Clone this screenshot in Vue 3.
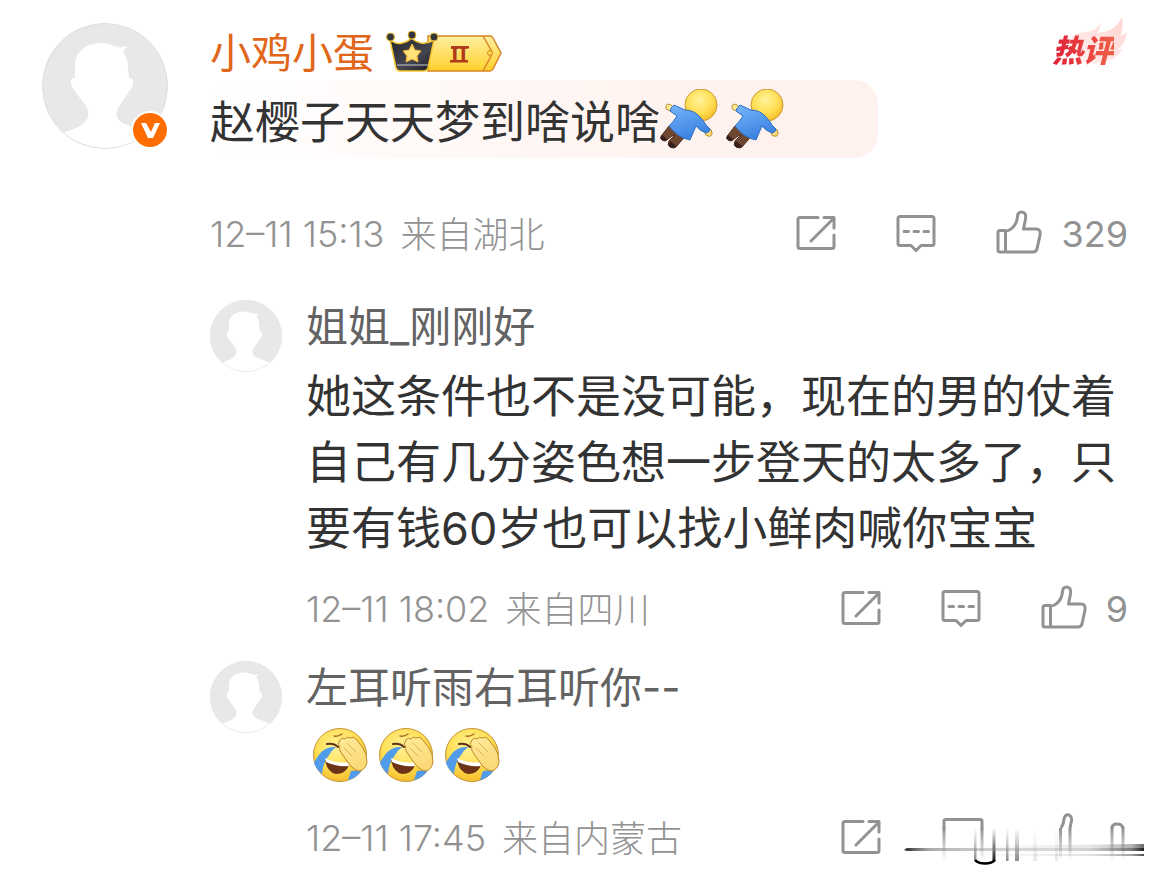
<template>
  <svg class="defs" width="0" height="0" aria-hidden="true">
    <defs>
      <linearGradient id="gold" x1="0" y1="0" x2="0" y2="1">
        <stop offset="0" stop-color="#fff0a0" />
        <stop offset="1" stop-color="#ffd02c" />
      </linearGradient>
      <linearGradient id="crown" x1="0" y1="0" x2="1" y2="1">
        <stop offset="0" stop-color="#25252d" />
        <stop offset="0.6" stop-color="#454550" />
        <stop offset="1" stop-color="#18181e" />
      </linearGradient>
      <radialGradient id="face" cx="0.45" cy="0.35" r="0.65">
        <stop offset="0" stop-color="#fff29a" />
        <stop offset="0.6" stop-color="#ffdf55" />
        <stop offset="1" stop-color="#f5bd2c" />
      </radialGradient>
      <linearGradient id="shirt" x1="0" y1="0" x2="0.4" y2="1">
        <stop offset="0" stop-color="#76b6fb" />
        <stop offset="1" stop-color="#3b82e2" />
      </linearGradient>
      <linearGradient id="hand" x1="0" y1="0" x2="0.4" y2="1">
        <stop offset="0" stop-color="#ffeb9a" />
        <stop offset="1" stop-color="#fbd977" />
      </linearGradient>
      <linearGradient id="flame" x1="0" y1="1" x2="1" y2="0">
        <stop offset="0" stop-color="#fff3f1" />
        <stop offset="1" stop-color="#ffd3d0" />
      </linearGradient>
      <linearGradient id="fade-down" x1="0" y1="0" x2="0" y2="1">
        <stop offset="0" stop-color="#8c8c8c" />
        <stop offset="1" stop-color="#8c8c8c" stop-opacity="0" />
      </linearGradient>
      <linearGradient id="fade-up" x1="0" y1="0" x2="0" y2="1">
        <stop offset="0" stop-color="#000" stop-opacity="0" />
        <stop offset="1" stop-color="#000" stop-opacity="0.9" />
      </linearGradient>
      <linearGradient id="fade-mid" x1="0" y1="0" x2="0" y2="1">
        <stop offset="0" stop-color="#000" stop-opacity="0" />
        <stop offset="1" stop-color="#000" stop-opacity="0.45" />
      </linearGradient>
      <linearGradient id="streak-left" x1="0" y1="0" x2="1" y2="0">
        <stop offset="0" stop-color="#222" />
        <stop offset="0.15" stop-color="#777" stop-opacity="0.6" />
        <stop offset="1" stop-color="#999" stop-opacity="0" />
      </linearGradient>
      <linearGradient id="streak-right" x1="0" y1="0" x2="1" y2="0">
        <stop offset="0" stop-color="#999" stop-opacity="0" />
        <stop offset="0.7" stop-color="#777" stop-opacity="0.3" />
        <stop offset="0.93" stop-color="#444" stop-opacity="0.7" />
        <stop offset="1" stop-color="#000" />
      </linearGradient>
      <symbol id="i-avatar" viewBox="0 0 126 126">
        <circle cx="63" cy="63" r="62.500" fill="#e8e8e8" />
        <path fill="#fff" d="M33 55V42C33 29 44 20 59 20c8 0 11 3 17 4 3 .500 6 0 9-1-1 3-3 4-4 6 3 5 5 9 5 15l1 11c3 0 4 1 4 4 0 4-1 6-3 8L76 85c-2 4-2 8 0 11 4 6 17 8 29 14a62 62 0 0 1-84 0c9-4 20-6 24-14 2-4 2-9-1-13L32 67c-2-3-3-5-3-8 0-3 1-4 4-4z" />
        <circle cx="63" cy="63" r="62.500" fill="none" stroke="#dfdfdf" />
      </symbol>
      <symbol id="i-share" viewBox="0 0 42 42">
        <path d="M23 4.500H5q-2 0-2 2v27q0 2 2 2h32q2 0 2-2V22M29 4.500h10V15M16 28L38 6" />
      </symbol>
      <symbol id="i-comment" viewBox="0 0 42 42">
        <path d="M5 3.500h32q2 0 2 2v25q0 2-2 2H26l-5 5-5-5H5q-2 0-2-2v-25q0-2 2-2zM9 18.500h4.500M19 18.500h4.500M29 18.500h4.500" />
      </symbol>
      <symbol id="i-like" viewBox="0 0 48 48">
        <path d="M10.500 20.500H5q-2 0-2 2V40q0 2 2 2h33q3 0 4-3l3-14q1-6-4-6H28.500l2-10q1-7-4-7-4 0-4 5-1 9-8 13-2 1-4 1V42" />
      </symbol>
      <symbol id="i-dive" viewBox="0 0 60 60">
        <path fill="#6f4630" stroke="#4f2e1f" d="M9 37L2 46q-3 3 0 5 3 2 5 0l5-4 3-1-6 6q-2 4 1 6 4 2 6 0l12-14z" />
        <path fill="#35211a" d="M2 46q-3 3 0 5 3 2 5-1zM10 52q-3 4 0 6 4 2 6-1z" />
        <circle cx="41" cy="16" r="16" fill="url(#face)" stroke="#c99a32" />
        <path fill="url(#hand)" stroke="#b58c28" d="M14 19l-3-3q-4-2-5 1-1 3 2 4l5 2zM45 43q0 4 3 4 4 1 4-3 0-4-3-4z" />
        <path fill="url(#shirt)" stroke="#316fc0" d="M14 16l11 5q9 0 15 7 4 4 6 8l4 4q0 3-4 4-6-2-10-7l-6 14q-12-2-21-14 5-5 8-10l-7-5q1-4 4-6z" />
      </symbol>
      <symbol id="i-facepalm" viewBox="0 0 56 56">
        <circle cx="28" cy="28" r="26.500" fill="url(#face)" stroke="#c49535" />
        <path fill="#509bea" d="M24 20q-11-1-17 8-4 5-5 8 2 6 8 11 1-12 7-19 3-5 7-8zM36 53l3-9 11-1q-5 8-14 10z" />
        <path fill="#6d3317" d="M13 33q9 5 24 5-3 9-13 9-9-2-11-14z" />
        <path fill="#fff" d="M13 31q12 6 23 4l1 4q-13 1-23-4z" />
        <path fill="none" stroke="#5d3415" stroke-width="2" stroke-linecap="round" d="M15 17q7-1 11 3" />
        <path fill="none" stroke="#a97524" stroke-width="1.500" stroke-linecap="round" d="M22 9q4 1 8-2" />
        <path fill="url(#hand)" stroke="#bd8828" d="M28 13q2-3 5-1 2-3 5-1 4-2 6 1l7 9q4 6 4 14-1 7-7 9-5 0-11-7l-9-13q-1-3 0-4-3-3-1-5z" />
        <path fill="none" stroke="#dfb053" stroke-linecap="round" d="M32 21l8 8M35 16l9 9" />
      </symbol>
    </defs>
  </svg>

  <main class="thread">
    <article class="comment">
      <div class="avatar-wrap">
        <svg class="avatar"><use href="#i-avatar" /></svg>
        <svg class="verified" viewBox="0 0 38 38">
          <circle cx="19" cy="19" r="19" fill="#fff" />
          <circle cx="19" cy="19" r="17" fill="#ff6d00" />
          <path fill="#fff" d="M10 12h5l5 9 4-9h5l-7 15h-5z" />
        </svg>
      </div>

      <div class="content">
        <header class="name-row">
          <a class="name main-name" href="#">小鸡小蛋</a>
          <svg class="level" viewBox="0 0 116 44">
            <path fill="url(#gold)" stroke="#d98426" stroke-width="1.500" d="M42 6h62q2 0 3 2l8 15-8 16q-1 2-3 2H42z" />
            <path fill="none" stroke="#d98426" stroke-width="1.500" d="M97 6l8 14q1 3 0 6l-8 15" />
            <circle cx="104" cy="23" r="2.500" fill="#ffd64a" stroke="#d98426" />
            <path fill="url(#crown)" stroke="#f7c72f" stroke-width="1.500" d="M4 10q7 5 12 3 6-1 9-5 5 4 10 5 6 1 13-3l-6 28q-1 3-4 3H14q-3 0-4-3z" />
            <path fill="none" stroke="#c9c9d2" d="M11 35h31" />
            <g fill="#34343c" stroke="#eabb2f">
              <circle cx="4.500" cy="7" r="4" />
              <circle cx="26" cy="5" r="4" />
              <circle cx="48" cy="7" r="4" />
            </g>
            <path fill="#ffe27a" stroke="#f2b62c" stroke-linejoin="round" d="M26 14l3 6 6 1-4 5 1 6-6-3-6 3 1-6-4-5 6-1z" />
            <text class="level-text" x="73" y="32" text-anchor="middle">II</text>
            <path fill="#b03a1c" d="M65 16h18v2.500H65zM64 30h18v2.500H64z" />
          </svg>
          <span class="hot">
            <svg class="flame" viewBox="0 0 66 54">
              <path fill="url(#flame)" d="M8 26Q11 14 25 15q9-1 14-9-1 6-4 10Q53 15 60 0q2 12-2 19 4-1 7-4-2 13-10 18l6-1q-8 12-24 14Q14 50 8 26z" />
            </svg>
            <b class="hot-text">热评</b>
          </span>
        </header>

        <p class="bubble">赵樱子天天梦到啥说啥<span class="emojis dives"><svg v-for="n in 2" :key="n" class="dive"><use href="#i-dive" /></svg></span></p>

        <footer class="meta">
          <span class="time">12–11 15:13</span>
          <span class="place">来自湖北</span>
          <div class="actions">
            <button type="button" aria-label="转发"><svg class="icon"><use href="#i-share" /></svg></button>
            <button type="button" aria-label="评论"><svg class="icon"><use href="#i-comment" /></svg></button>
            <button type="button" class="like"><svg class="icon icon-like"><use href="#i-like" /></svg>329</button>
          </div>
        </footer>

        <section class="replies">
          <article v-for="reply in replies" :key="reply.name" class="reply">
            <svg class="avatar avatar-small"><use href="#i-avatar" /></svg>
            <div class="content">
              <a class="name reply-name" href="#">{{ reply.name }}</a>
              <p v-if="reply.text" class="text">{{ reply.text }}</p>
              <p v-else class="text emojis">
                <svg v-for="n in reply.faces" :key="n" class="face"><use href="#i-facepalm" /></svg>
              </p>
              <footer class="meta">
                <span class="time">{{ reply.time }}</span>
                <span class="place">{{ reply.place }}</span>
                <div class="actions" :class="{ smudged: !reply.likes }">
                  <button type="button" aria-label="转发"><svg class="icon"><use href="#i-share" /></svg></button>
                  <template v-if="reply.likes">
                    <button type="button" aria-label="评论"><svg class="icon"><use href="#i-comment" /></svg></button>
                    <button type="button" class="like"><svg class="icon icon-like"><use href="#i-like" /></svg>{{ reply.likes }}</button>
                  </template>
                  <svg v-else class="smudge" viewBox="0 0 242 56">
                    <g fill="none" stroke="#929292" stroke-width="3">
                      <path d="M40 19v-8q0-1.500 2-1.500h34q2 0 2 1.500v8" />
                      <path d="M157 18q3-5 3-9 1-5 5-4 4 2 2 8l-1 5" />
                      <path d="M208 18q0-4 5-4t6 4" />
                    </g>
                    <path fill="url(#fade-down)" d="M38.500 18h3v32h-3zM76.500 18h3v30h-3zM155 18h3v32h-3zM164.500 18h3v32h-3zM206.500 17h3v32h-3zM217.500 17h3v32h-3z" />
                    <path fill="url(#fade-up)" d="M88.500 18h3v33h-3z" />
                    <path fill="url(#fade-mid)" d="M70 18h2.500v33H70zM102 18h2.500v33H102zM111 18h4v33h-4z" />
                    <path fill="url(#fade-mid)" opacity="0.200" d="M129 18h4v33h-4zM151 18h3v33h-3z" />
                    <path fill="none" stroke="#000" stroke-width="2.500" d="M71 50q3 3.500 10 3.500T91 50" />
                    <path fill="url(#streak-left)" d="M0 40l3-2h170v3H3z" />
                    <path fill="url(#streak-right)" opacity="0.600" d="M60 36l175-2h5v7H60z" />
                    <path fill="url(#streak-right)" opacity="0.700" d="M60 38h180v3H60zM60 44h180v2H60z" />
                  </svg>
                </div>
              </footer>
            </div>
          </article>
        </section>
      </div>
    </article>
  </main>
</template>

<script setup>
const replies = [
  {
    name: '姐姐_刚刚好',
    text: '她这条件也不是没可能，现在的男的仗着自己有几分姿色想一步登天的太多了，只要有钱60岁也可以找小鲜肉喊你宝宝',
    time: '12–11 18:02',
    place: '来自四川',
    likes: 9,
  },
  {
    name: '左耳听雨右耳听你--',
    faces: 3,
    time: '12–11 17:45',
    place: '来自内蒙古',
  },
];
</script>

<style>
body {
  background: #fff;
}
</style>

<style scoped>
.defs {
  position: absolute;
}
.thread {
  padding: 23px 42px;
  color: #333;
  font-family: Inter, "Noto Sans CJK SC", sans-serif;
}
.comment {
  display: flex;
  gap: 42px;
}
.content {
  flex: 1;
  min-width: 0;
}
.avatar-wrap {
  position: relative;
  flex: none;
  width: 126px;
  height: 126px;
}
.avatar {
  display: block;
  flex: none;
  width: 126px;
  height: 126px;
}
.avatar-small {
  width: 72px;
  height: 72px;
}
.verified {
  position: absolute;
  right: -1px;
  bottom: 0;
  width: 38px;
  height: 38px;
}
.name {
  font-size: 42px;
  text-decoration: none;
}
.name-row {
  display: flex;
  align-items: center;
  gap: 12px;
  height: 57px;
}
.main-name {
  padding-bottom: 4px;
  color: #e0661a;
  font-size: 41px;
}
.level {
  width: 116px;
  height: 44px;
}
.level-text {
  font: bold 22px "Liberation Serif", serif;
  fill: #b03a1c;
}
.hot {
  position: relative;
  margin-left: auto;
  padding: 0 14px 6px 0;
}
.flame {
  position: absolute;
  right: 0;
  bottom: 6px;
  width: 66px;
  height: 54px;
}
.hot-text {
  position: relative;
  font-size: 31px;
  font-style: italic;
  font-weight: 900;
  background: linear-gradient(90deg, #df2038, #ef6048);
  background-clip: text;
  color: transparent;
}
.bubble {
  display: flex;
  align-items: center;
  width: fit-content;
  height: 78px;
  margin: 0;
  padding-right: 92px;
  border-radius: 24px;
  background: linear-gradient(90deg, #fff, #fff3ef 70%, #fff1ed);
  font-size: 45px;
}
.emojis {
  display: flex;
  align-items: center;
}
.dives {
  gap: 6px;
}
.dive {
  width: 60px;
  height: 60px;
}
.meta {
  display: flex;
  align-items: center;
  gap: 16px;
  height: 48px;
  margin-top: 23px;
  color: #929292;
  font-size: 36px;
  font-weight: 300;
}
.place {
  padding-bottom: 4px;
}
.bubble + .meta {
  margin-top: 52px;
}
.actions {
  display: flex;
  align-items: center;
  gap: 58px;
  margin-left: auto;
}
.actions button {
  display: flex;
  align-items: center;
  gap: 18px;
  padding: 0;
  border: 0;
  background: none;
  color: inherit;
  font-family: inherit;
  font-size: 36px;
  font-weight: 400;
  line-height: 48px;
}
.icon {
  width: 42px;
  height: 42px;
  fill: none;
  stroke: #929292;
  stroke-width: 3;
  stroke-linecap: round;
  stroke-linejoin: round;
}
.icon-like {
  width: 48px;
  height: 48px;
}
.smudged {
  gap: 22px;
  margin-right: -18px;
}
.smudge {
  width: 242px;
  height: 56px;
}
.replies {
  display: flex;
  flex-direction: column;
  gap: 28px;
  margin-top: 42px;
}
.reply {
  display: flex;
  gap: 24px;
}
.reply-name {
  display: block;
  color: #636363;
  line-height: 54px;
}
.text {
  min-height: 66px;
  margin: 10px 0 0;
  font-size: 45px;
  line-height: 66px;
}
.text.emojis {
  gap: 10px;
  min-height: 60px;
  padding: 0 0 6px 6px;
}
.face {
  width: 56px;
  height: 56px;
}
</style>
